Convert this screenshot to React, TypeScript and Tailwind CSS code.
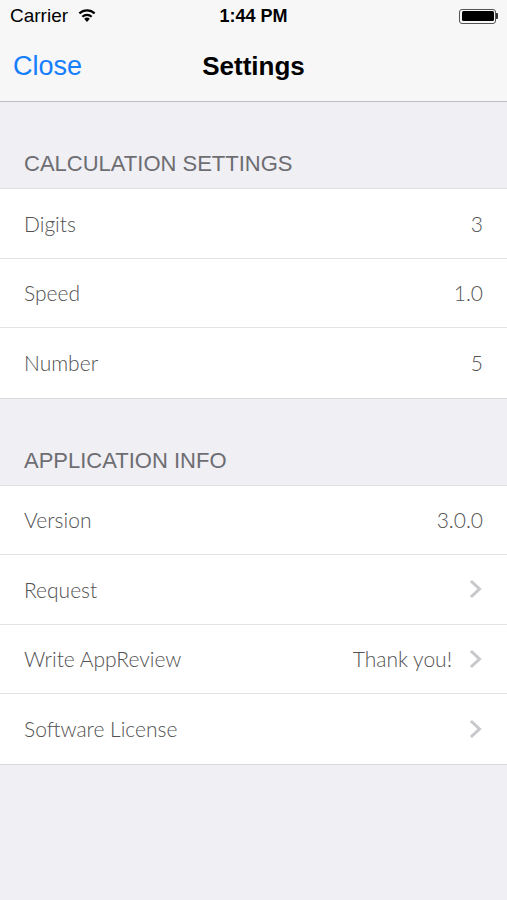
import React from "react";

const rowFont = { fontFamily: "Lato, 'Open Sans', sans-serif" };

function Chevron() {
  return (
    <svg width="14" height="20" viewBox="0 0 14 20" className="shrink-0">
      <path d="M3 3 L10.5 10 L3 17" fill="none" stroke="#c7c7cc" strokeWidth="3" strokeLinecap="square" />
    </svg>
  );
}

function Row({ label, value, chevron, last }: { label: string; value?: string; chevron?: boolean; last?: boolean }) {
  return (
    <div className={`h-[69.5px] flex items-center pl-[24px] pr-[24px] bg-white ${last ? "" : "border-b border-[#e3e3e5]"}`}>
      <span className="flex-1 text-[21px] font-light text-[#525252]" style={rowFont}>{label}</span>
      {value && <span className="text-[21px] font-light text-[#525252]" style={rowFont}>{value}</span>}
      {chevron && <span className={value ? "ml-[17px]" : ""}><Chevron /></span>}
    </div>
  );
}

function Header({ title }: { title: string }) {
  return (
    <div className="h-[87px] flex items-end pl-[24px] pb-[11px] bg-[#efeff4] border-b border-[#e0e0e4]">
      <span className="text-[22px] leading-[26px] text-[#6d6d72] uppercase" style={{ fontFamily: "'Liberation Sans', Arial, sans-serif" }}>{title}</span>
    </div>
  );
}

export default function App() {
  return (
    <div className="w-[507px] h-[900px] bg-[#efeff4] flex flex-col" style={{ fontFamily: "'Liberation Sans', Arial, sans-serif" }}>
      <div className="bg-[#f7f7f8] border-b border-[#bdbdc2]">
        <div className="h-[32px] relative flex items-center px-[10px]">
          <span className="text-[19px] text-black">Carrier</span>
          <svg width="20" height="16" viewBox="0 0 20 16" className="ml-[9px] mt-[-2px]">
            <path d="M10 15 L7.2 11.8 A4.2 4.2 0 0 1 12.8 11.8 Z" fill="#000" />
            <path d="M4.6 8.9 A7.8 7.8 0 0 1 15.4 8.9 L13.9 10.6 A5.6 5.6 0 0 0 6.1 10.6 Z" fill="#000" />
            <path d="M1.6 5.6 A12 12 0 0 1 18.4 5.6 L16.9 7.3 A9.7 9.7 0 0 0 3.1 7.3 Z" fill="#000" />
          </svg>
          <span className="absolute left-0 right-0 text-center text-[18px] font-bold text-black pointer-events-none">1:44 PM</span>
          <div className="ml-auto flex items-center mr-[-1px]">
            <div className="w-[37px] h-[15px] rounded-[3px] border border-[#555] p-[1.5px]">
              <div className="w-full h-full bg-black rounded-[1.5px]" />
            </div>
            <div className="w-[2px] h-[6px] bg-[#333] rounded-r-[1px]" />
          </div>
        </div>
        <div className="h-[69px] relative flex items-center px-[13px]">
          <span className="text-[27px] text-[#157efb]">Close</span>
          <span className="absolute left-0 right-0 text-center text-[26px] font-bold text-black pointer-events-none">Settings</span>
        </div>
      </div>
      <Header title="Calculation Settings" />
      <div className="border-b border-[#d9d9dc]">
        <Row label="Digits" value="3" />
        <Row label="Speed" value="1.0" />
        <Row label="Number" value="5" last />
      </div>
      <Header title="Application Info" />
      <div className="border-b border-[#d9d9dc]">
        <Row label="Version" value="3.0.0" />
        <Row label="Request" chevron />
        <Row label="Write AppReview" value="Thank you!" chevron />
        <Row label="Software License" chevron last />
      </div>
    </div>
  );
}
